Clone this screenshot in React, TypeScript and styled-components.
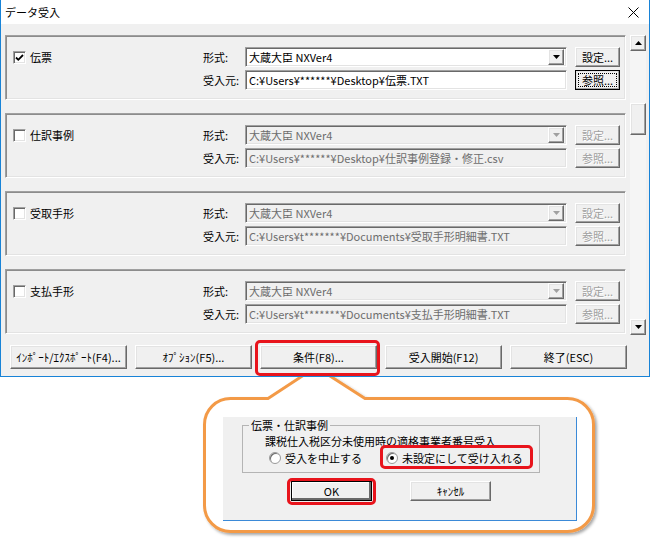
import React from "react";
import styled, { createGlobalStyle, css } from "styled-components";

const GlobalStyle = createGlobalStyle`
  html, body {
    margin: 0;
    padding: 0;
    background: #ffffff;
  }
  body {
    font-family: "Noto Sans CJK JP", "Noto Sans", sans-serif;
    font-size: 11px;
    color: #000;
  }
  * {
    box-sizing: border-box;
  }
`;

type ImportGroup = {
  name: string;
  checked: boolean;
  path: string;
};

const groups: ImportGroup[] = [
  { name: "伝票", checked: true, path: "C:¥Users¥******¥Desktop¥伝票.TXT" },
  { name: "仕訳事例", checked: false, path: "C:¥Users¥******¥Desktop¥仕訳事例登録・修正.csv" },
  { name: "受取手形", checked: false, path: "C:¥Users¥t*******¥Documents¥受取手形明細書.TXT" },
  { name: "支払手形", checked: false, path: "C:¥Users¥t*******¥Documents¥支払手形明細書.TXT" },
];

const raised = css`
  background: #f0f0f0;
  border: 1px solid;
  border-color: #ffffff #696969 #696969 #ffffff;
  box-shadow: inset -1px -1px #a0a0a0, inset 1px 1px #e3e3e3;
`;

const sunken = css`
  border: 1px solid;
  border-color: #a0a0a0 #ffffff #ffffff #a0a0a0;
  box-shadow: inset 1px 1px #696969, inset -1px -1px #e3e3e3;
`;

export default function App() {
  return (
    <>
      <GlobalStyle />
      <Page>
        <Win>
          <TitleBar>
            <span>データ受入</span>
            <svg width="11" height="11" viewBox="0 0 11 11">
              <path d="M0.5 0.5 L10.5 10.5 M10.5 0.5 L0.5 10.5" stroke="#000" strokeWidth="1" />
            </svg>
          </TitleBar>
          <WinBody>
            <ListRow>
              <GroupList>
                {groups.map((g) => {
                  const off = !g.checked;
                  return (
                    <GroupBox key={g.name}>
                      <CheckCol>
                        <CheckBox>
                          {g.checked && (
                            <svg width="9" height="9" viewBox="0 0 9 9">
                              <path d="M1 4.5 L3.3 6.8 L8 2" stroke="#000" strokeWidth="1.8" fill="none" />
                            </svg>
                          )}
                        </CheckBox>
                        <span>{g.name}</span>
                      </CheckCol>
                      <FormGrid>
                        <FieldLabel>形式:</FieldLabel>
                        <Field $disabled={off}>
                          <FieldText>大蔵大臣 NXVer4</FieldText>
                          <DropBtn $disabled={off}>
                            <svg width="7" height="4" viewBox="0 0 7 4">
                              <path d="M0 0 H7 L3.5 4 Z" fill={off ? "#a0a0a0" : "#000"} />
                            </svg>
                          </DropBtn>
                        </Field>
                        <SmallBtn $disabled={off}>設定...</SmallBtn>
                        <FieldLabel>受入元:</FieldLabel>
                        <Field $disabled={off}>
                          <FieldText>{g.path}</FieldText>
                        </Field>
                        <SmallBtn $disabled={off} $focused={!off}>
                          参照...
                        </SmallBtn>
                      </FormGrid>
                    </GroupBox>
                  );
                })}
              </GroupList>
              <ScrollBar>
                <ScrollBtn>
                  <svg width="7" height="4" viewBox="0 0 7 4">
                    <path d="M0 4 H7 L3.5 0 Z" fill="#000" />
                  </svg>
                </ScrollBtn>
                <Track>
                  <Thumb $offset={52} />
                </Track>
                <ScrollBtn>
                  <svg width="7" height="4" viewBox="0 0 7 4">
                    <path d="M0 0 H7 L3.5 4 Z" fill="#000" />
                  </svg>
                </ScrollBtn>
              </ScrollBar>
            </ListRow>
            <ButtonRow>
              <WinButton>ｲﾝﾎﾟｰﾄ/ｴｸｽﾎﾟｰﾄ(F4)...</WinButton>
              <WinButton>ｵﾌﾟｼｮﾝ(F5)...</WinButton>
              <Highlight $inset="-5px -3px -7px -5px">
                <WinButton>条件(F8)...</WinButton>
              </Highlight>
              <WinButton>受入開始(F12)</WinButton>
              <WinButton>終了(ESC)</WinButton>
            </ButtonRow>
          </WinBody>
        </Win>

        <Callout>
          <Bubble width="400" height="172" viewBox="0 0 400 172">
            <defs>
              <filter id="bubbleShadow" x="-5%" y="-5%" width="115%" height="115%">
                <feDropShadow dx="2" dy="2" stdDeviation="1.6" floodColor="#000" floodOpacity="0.35" />
              </filter>
            </defs>
            <path
              d="M65 31.5 L113 0 L162 31.5 H364.5 A26 26 0 0 1 390.5 57.5 V138.5 A26 26 0 0 1 364.5 164.5 H27.5 A26 26 0 0 1 1.5 138.5 V57.5 A26 26 0 0 1 27.5 31.5 Z"
              fill="#ffffff"
              stroke="#f39a47"
              strokeWidth="3"
              filter="url(#bubbleShadow)"
            />
          </Bubble>
          <SubDialog>
            <Frame>
              <Legend>伝票・仕訳事例</Legend>
              <FrameBody>
                <div>課税仕入税区分未使用時の適格事業者番号受入</div>
                <RadioRow>
                  <RadioItem>
                    <Radio />
                    <span>受入を中止する</span>
                  </RadioItem>
                  <Highlight $inset="-5px -10px -3px -6px">
                    <RadioItem>
                      <Radio $checked />
                      <span>未設定にして受け入れる</span>
                    </RadioItem>
                  </Highlight>
                </RadioRow>
              </FrameBody>
            </Frame>
            <DialogButtons>
              <Highlight $inset="-3px -4px -4px -4px">
                <DialogButton $default>OK</DialogButton>
              </Highlight>
              <DialogButton>ｷｬﾝｾﾙ</DialogButton>
            </DialogButtons>
          </SubDialog>
        </Callout>
      </Page>
    </>
  );
}

const Page = styled.div`
  width: 650px;
  height: 541px;
  overflow: hidden;
  position: relative;
`;

const Win = styled.div`
  position: relative;
  z-index: 2;
  width: 650px;
  height: 377px;
  border: 1px solid #1883d7;
  border-top: none;
  background: #f0f0f0;
  display: flex;
  flex-direction: column;
`;

const TitleBar = styled.div`
  height: 24px;
  flex-shrink: 0;
  background: #ffffff;
  display: flex;
  align-items: center;
  justify-content: space-between;
  padding: 0 10px 0 4px;
  font-size: 11px;
`;

const WinBody = styled.div`
  padding: 11px 3px 0 4px;
`;

const ListRow = styled.div`
  display: flex;
  gap: 4px;
  height: 300px;
`;

const GroupList = styled.div`
  width: 621px;
  display: flex;
  flex-direction: column;
  gap: 13px;
`;

const GroupBox = styled.div`
  height: 65px;
  border: 1px solid;
  border-color: #a0a0a0 #ffffff #ffffff #a0a0a0;
  box-shadow: inset 1px 1px #8c8c8c, inset -1px -1px #e3e3e3;
  display: flex;
  align-items: flex-start;
  padding: 11px 5px 0 7px;
`;

const CheckCol = styled.div`
  width: 190px;
  height: 20px;
  display: flex;
  align-items: center;
  gap: 4px;
`;

const CheckBox = styled.div`
  width: 13px;
  height: 13px;
  background: #ffffff;
  ${sunken};
  display: flex;
  align-items: center;
  justify-content: center;
`;

const FormGrid = styled.div`
  display: grid;
  grid-template-columns: 42px 322px 53px;
  grid-auto-rows: 20px;
  row-gap: 3px;
  align-items: center;
`;

const FieldLabel = styled.span`
  white-space: nowrap;
`;

const Field = styled.div<{ $disabled?: boolean }>`
  height: 20px;
  ${sunken};
  background: ${(p) => (p.$disabled ? "#f0f0f0" : "#ffffff")};
  color: ${(p) => (p.$disabled ? "#6d6d6d" : "#000000")};
  display: flex;
  align-items: center;
  padding: 0 2px 0 3px;
  overflow: hidden;
`;

const FieldText = styled.span`
  flex: 1;
  white-space: nowrap;
  overflow: hidden;
`;

const DropBtn = styled.div<{ $disabled?: boolean }>`
  width: 16px;
  height: 16px;
  ${raised};
  display: flex;
  align-items: center;
  justify-content: center;
`;

const SmallBtn = styled.div<{ $disabled?: boolean; $focused?: boolean }>`
  justify-self: end;
  width: 45px;
  height: 20px;
  ${raised};
  color: ${(p) => (p.$disabled ? "#a0a0a0" : "#000000")};
  text-shadow: ${(p) => (p.$disabled ? "1px 1px #ffffff" : "none")};
  display: flex;
  align-items: center;
  justify-content: center;
  white-space: nowrap;
  ${(p) =>
    p.$focused &&
    css`
      border-color: #000;
      outline: 1px dotted #000;
      outline-offset: -4px;
    `}
`;

const ScrollBar = styled.div`
  width: 16px;
  display: flex;
  flex-direction: column;
  background: #f5f5f5;
`;

const ScrollBtn = styled.div`
  width: 16px;
  height: 16px;
  ${raised};
  display: flex;
  align-items: center;
  justify-content: center;
`;

const Track = styled.div`
  flex: 1;
  display: flex;
  flex-direction: column;
`;

const Thumb = styled.div<{ $offset: number }>`
  margin-top: ${(p) => p.$offset}px;
  width: 16px;
  height: 32px;
  ${raised};
`;

const ButtonRow = styled.div`
  margin-top: 10px;
  padding-left: 5px;
  display: flex;
  gap: 8px;
`;

const WinButton = styled.div`
  width: 117px;
  height: 24px;
  ${raised};
  display: flex;
  align-items: center;
  justify-content: center;
  white-space: nowrap;
`;

const Highlight = styled.div<{ $inset: string }>`
  position: relative;
  display: flex;

  &::after {
    content: "";
    position: absolute;
    inset: ${(p) => p.$inset};
    border: 3px solid #e8141c;
    border-radius: 5px;
    pointer-events: none;
  }
`;

const Callout = styled.div`
  position: relative;
  z-index: 1;
  margin: 20px 0 0 203px;
  width: 392px;
  height: 136px;
  padding: 15px 0 0 20px;
`;

const Bubble = styled.svg`
  position: absolute;
  left: 0;
  top: -30px;
  overflow: visible;
`;

const SubDialog = styled.div`
  position: relative;
  width: 354px;
  height: 104px;
  background: #f0f0f0;
  border-right: 1px solid #3b8ad8;
  border-bottom: 1px solid #3b8ad8;
  padding: 0 0 0 19px;
`;

const Frame = styled.fieldset`
  margin: 5px 0 0 0;
  padding: 0 0 6px 0;
  width: 298px;
  min-width: 0;
  border: 1px solid #b4b4b4;
`;

const Legend = styled.legend`
  margin-left: 6px;
  padding: 0 2px;
  line-height: 16px;
`;

const FrameBody = styled.div`
  padding-left: 22px;
  line-height: 16px;
`;

const RadioRow = styled.div`
  margin-top: 1px;
  padding-left: 4px;
  display: flex;
  gap: 24px;
`;

const RadioItem = styled.div`
  display: flex;
  align-items: center;
  gap: 4px;
  white-space: nowrap;
`;

const Radio = styled.span<{ $checked?: boolean }>`
  width: 12px;
  height: 12px;
  border-radius: 50%;
  background: #ffffff;
  border: 1px solid #9a9a9a;
  box-shadow: inset 1px 1px #6d6d6d;
  display: inline-flex;
  align-items: center;
  justify-content: center;

  &::after {
    content: "";
    width: 4px;
    height: 4px;
    border-radius: 50%;
    background: ${(p) => (p.$checked ? "#000" : "transparent")};
  }
`;

const DialogButtons = styled.div`
  margin-top: 8px;
  padding-left: 49px;
  display: flex;
  gap: 38px;
`;

const DialogButton = styled.div<{ $default?: boolean }>`
  width: 81px;
  height: 20px;
  ${raised};
  display: flex;
  align-items: center;
  justify-content: center;
  ${(p) =>
    p.$default &&
    css`
      border-color: #000;
      box-shadow: inset -2px -2px #696969, inset 1px 1px #ffffff;
    `}
`;
